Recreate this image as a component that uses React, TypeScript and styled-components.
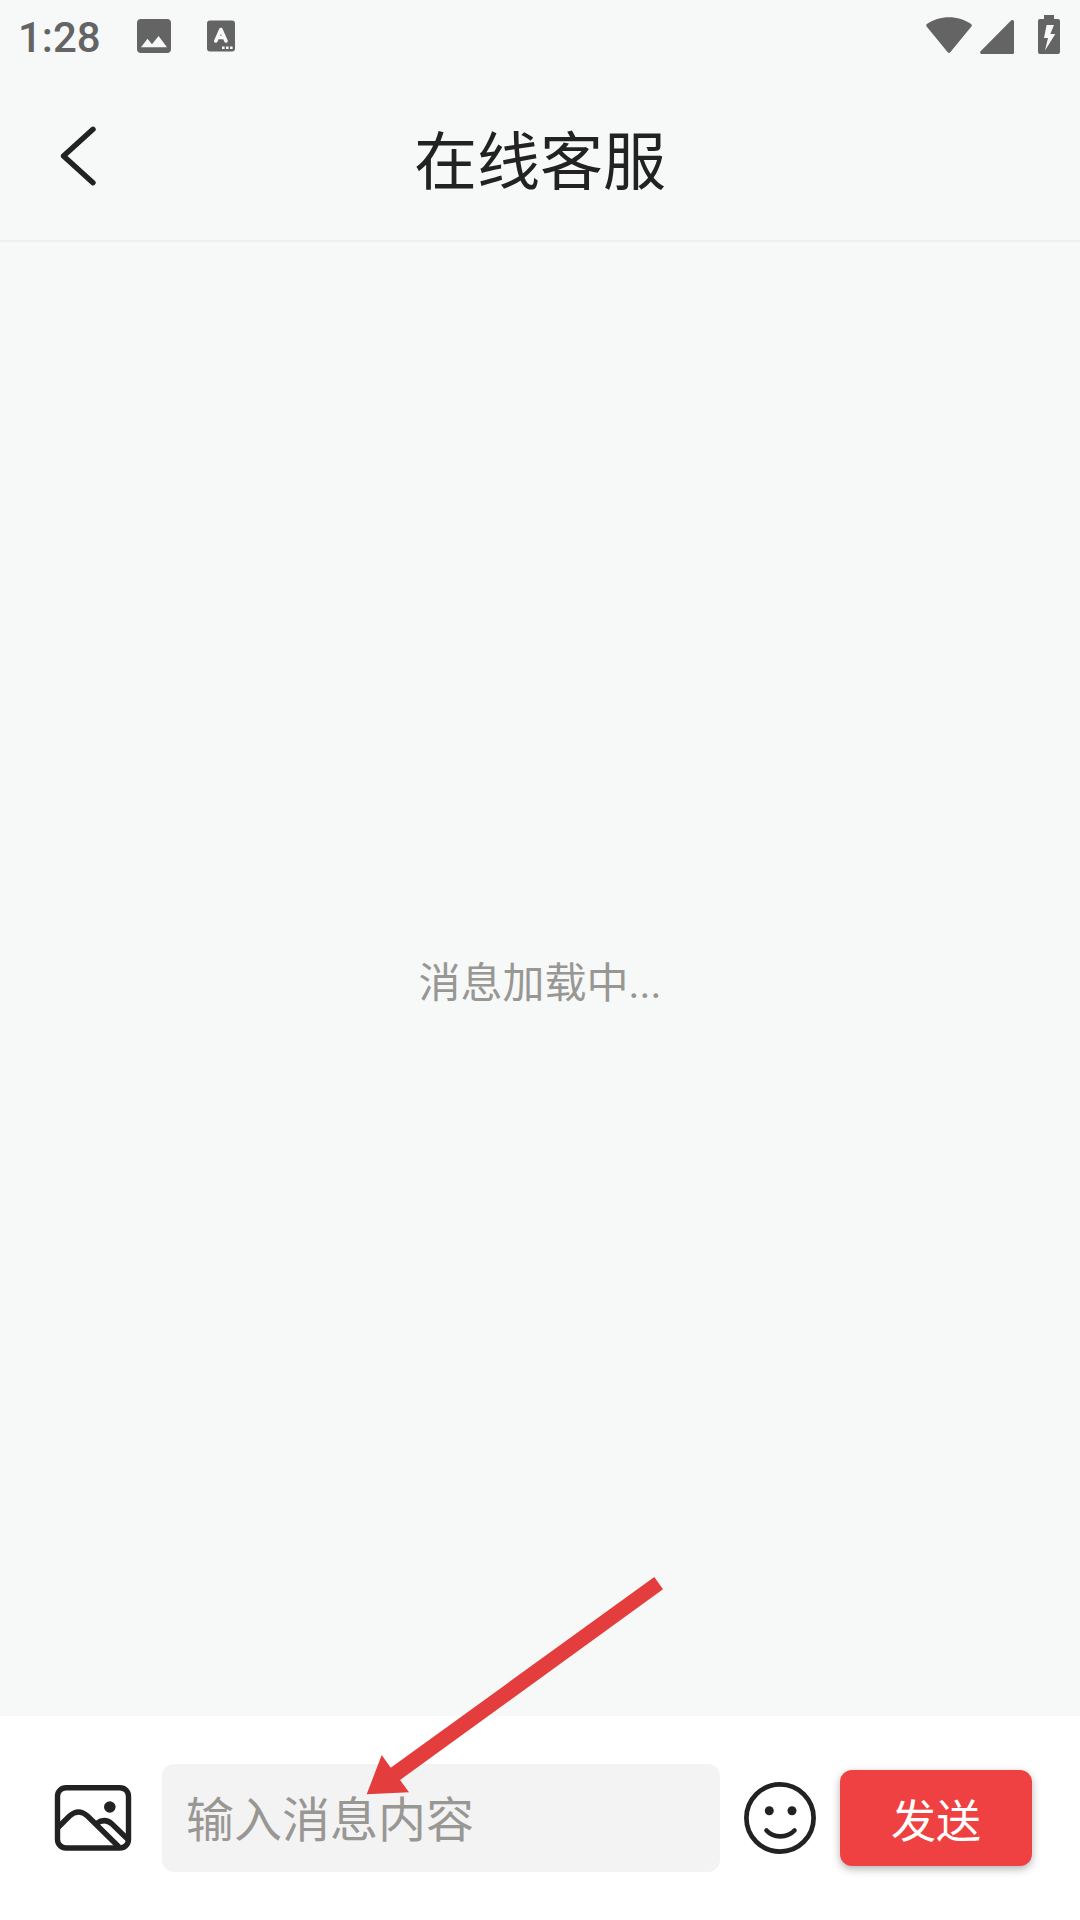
import React, { useState } from "react";
import styled, { createGlobalStyle } from "styled-components";

const colors = {
  page: "#f7f9f8",
  surface: "#ffffff",
  field: "#f3f3f3",
  line: "#eeefef",
  ink: "#222222",
  status: "#646464",
  muted: "#999794",
  primary: "#f04142",
  pointer: "#e43d3e",
};

const GlobalStyle = createGlobalStyle`
  * { box-sizing: border-box; }
  body {
    margin: 0;
    background: ${colors.page};
    font-family: Roboto, "Noto Sans CJK SC", sans-serif;
  }
`;

const Screen = styled.div`
  display: flex;
  flex-direction: column;
  min-height: 100vh;
  background: ${colors.page};
  color: ${colors.ink};
`;

const StatusBar = styled.div`
  display: flex;
  align-items: flex-end;
  justify-content: space-between;
  height: 72px;
  padding: 0 20px 18px 18px;
  color: ${colors.status};
`;

const StatusGroup = styled.div<{ $gap: number }>`
  display: flex;
  align-items: flex-end;
  gap: ${({ $gap }) => $gap}px;

  svg {
    display: block;
    fill: currentColor;
  }
`;

const Clock = styled.time`
  font-size: 42px;
  line-height: 32px;
  font-weight: 500;
`;

const Header = styled.header`
  display: grid;
  grid-template-columns: 96px 1fr 96px;
  align-items: center;
  height: 170px;
  padding: 0 30px;
  border-bottom: 2px solid ${colors.line};
`;

const IconButton = styled.button<{ $width: number }>`
  display: flex;
  flex: none;
  align-items: center;
  justify-content: center;
  width: ${({ $width }) => $width}px;
  height: 96px;
  padding: 0;
  border: 0;
  background: none;
  color: ${colors.ink};
  cursor: pointer;
`;

const Title = styled.h1`
  margin: 0;
  font-size: 63px;
  line-height: normal;
  font-weight: 400;
  text-align: center;
`;

const Messages = styled.main`
  display: flex;
  flex: 1;
  align-items: center;
  justify-content: center;
`;

const Loading = styled.p`
  margin: 0;
  font-size: 42px;
  line-height: normal;
  color: ${colors.muted};
`;

const Composer = styled.form`
  display: flex;
  align-items: center;
  gap: 24px;
  padding: 48px;
  background: ${colors.surface};
`;

const Field = styled.div`
  position: relative;
  flex: 1;
  min-width: 0;
`;

const MessageInput = styled.input`
  display: block;
  width: 100%;
  height: 108px;
  padding: 4px 24px 0;
  border: 0;
  border-radius: 12px;
  outline: 0;
  background: ${colors.field};
  color: ${colors.ink};
  font-family: inherit;
  font-size: 48px;

  &::placeholder {
    color: ${colors.muted};
    opacity: 1;
  }
`;

const Pointer = styled.svg`
  position: absolute;
  left: 204px;
  bottom: 77px;
  pointer-events: none;
  fill: ${colors.pointer};
`;

const SendButton = styled.button`
  flex: none;
  width: 192px;
  height: 96px;
  padding: 0;
  border: 0;
  border-radius: 12px;
  background: ${colors.primary};
  box-shadow: 0 3px 8px rgba(0, 0, 0, 0.3);
  color: #ffffff;
  font-family: inherit;
  font-size: 45px;
  line-height: normal;
  cursor: pointer;
`;

const BatterySlot = styled.span`
  padding-left: 16px;
`;

const PictureNotice = () => (
  <svg width="34" height="35" viewBox="0 0 34 35" aria-hidden="true">
    <path
      fillRule="evenodd"
      d="M4 0h26a4 4 0 0 1 4 4v26a4 4 0 0 1-4 4H4a4 4 0 0 1-4-4V4a4 4 0 0 1 4-4ZM4 28.3h26L21.6 17 15 25.3l-4.5-5.6Z"
    />
  </svg>
);

const KeyboardNotice = () => (
  <svg width="28" height="34" viewBox="0 0 28 34" aria-hidden="true">
    <rect y="0.5" width="28" height="31" rx="3" />
    <path
      d="M8.8 21 13.9 9.5 19 21M10.8 17.5h6.2"
      fill="none"
      stroke={colors.page}
      strokeWidth="3.6"
      strokeLinecap="round"
      strokeLinejoin="round"
    />
    <path d="M15 26.5h2.6v2.6H15zM19 26.5h2.6v2.6H19zM23 26.5h2.6v2.6H23z" fill={colors.page} />
  </svg>
);

const Wifi = () => (
  <svg width="46" height="37" viewBox="0 0 46 37" aria-hidden="true">
    <path d="M.6 9.4C-.1 8.6 0 7.6 .9 6.9 7 2.700 15 .2 23 .2s16 2.500 22.100 6.700c.9.7 1 1.700.3 2.500L24.300 35.300c-.8 1-1.800 1-2.600 0Z" />
  </svg>
);

const Signal = () => (
  <svg width="34" height="34" viewBox="0 0 34 34" aria-hidden="true">
    <path d="M30.8.7C32-.5 34 .2 34 1.800V32.500a1.500 1.500 0 0 1-1.500 1.500H1.800C.2 34-.4 32.400.6 31.300Z" />
  </svg>
);

const Battery = () => (
  <svg width="22" height="39" viewBox="0 0 22 39" aria-hidden="true">
    <path
      fillRule="evenodd"
      d="M6 0h10v4h4a2 2 0 0 1 2 2v31a2 2 0 0 1-2 2H2a2 2 0 0 1-2-2V6a2 2 0 0 1 2-2h4ZM8.600 10 6 23h4L7 35.500 17.300 19h-5L16 10Z"
    />
  </svg>
);

const BackArrow = () => (
  <svg width="40" height="64" viewBox="0 0 40 64" aria-hidden="true">
    <path
      d="M35 5.300 5.500 32 35 58.700"
      fill="none"
      stroke="currentColor"
      strokeWidth="5.400"
      strokeLinecap="round"
      strokeLinejoin="round"
    />
  </svg>
);

const PictureIcon = () => (
  <svg width="78" height="66" viewBox="0 0 78 66" aria-hidden="true">
    <g fill="none" stroke="currentColor" strokeWidth="5.400">
      <rect x="3.500" y="2.700" width="71" height="60.300" rx="8.500" />
      <path d="M4 42.500 15.500 31Q24.500 23 33.500 31L65 62" />
      <path d="M42.500 38.500Q51 32.500 58 39L73.500 54" />
    </g>
    <circle cx="55.800" cy="22" r="5.800" fill="currentColor" />
  </svg>
);

const SmileIcon = () => (
  <svg width="72" height="72" viewBox="0 0 72 72" aria-hidden="true">
    <circle cx="36" cy="36" r="33.600" fill="none" stroke="currentColor" strokeWidth="4.700" />
    <circle cx="25.300" cy="28.700" r="4.500" fill="currentColor" />
    <circle cx="48" cy="28.700" r="4.500" fill="currentColor" />
    <path
      d="M22.500 48.500C29.500 56.300 43 56.300 50.500 48.500"
      fill="none"
      stroke="currentColor"
      strokeWidth="4.600"
      strokeLinecap="round"
    />
  </svg>
);

export default function App() {
  const [message, setMessage] = useState("");

  return (
    <Screen>
      <GlobalStyle />
      <StatusBar>
        <StatusGroup $gap={36}>
          <Clock>1:28</Clock>
          <PictureNotice />
          <KeyboardNotice />
        </StatusGroup>
        <StatusGroup $gap={8}>
          <Wifi />
          <Signal />
          <BatterySlot>
            <Battery />
          </BatterySlot>
        </StatusGroup>
      </StatusBar>

      <Header>
        <IconButton $width={96} type="button" aria-label="返回">
          <BackArrow />
        </IconButton>
        <Title>在线客服</Title>
      </Header>

      <Messages>
        <Loading role="status">消息加载中...</Loading>
      </Messages>

      <Composer onSubmit={(event) => event.preventDefault()}>
        <IconButton $width={90} type="button" aria-label="图片">
          <PictureIcon />
        </IconButton>
        <Field>
          <MessageInput
            aria-label="消息内容"
            placeholder="输入消息内容"
            value={message}
            onChange={(event) => setMessage(event.target.value)}
          />
          <Pointer width="298" height="220" viewBox="0 0 298 220" aria-hidden="true">
            <path d="M288.300 2 297 14.300 34 205 43 217.300.7 219.300 15.700 180 24.700 192.700Z" />
          </Pointer>
        </Field>
        <IconButton $width={72} type="button" aria-label="表情">
          <SmileIcon />
        </IconButton>
        <SendButton type="submit">发送</SendButton>
      </Composer>
    </Screen>
  );
}
